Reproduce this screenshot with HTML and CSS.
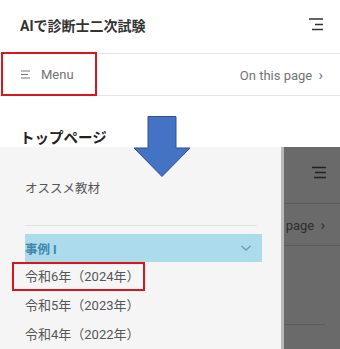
FILE: index.html
```html
<!DOCTYPE html>
<html lang="ja">
<head>
  <meta charset="UTF-8" />
  <meta name="viewport" content="width=device-width, initial-scale=1.0"/>
  <title>AIで診断士二次試験</title>
  <link rel="stylesheet" href="styles.css">
</head>
<body>

  <header class="site-header">
    <span class="site-title">AIで診断士二次試験</span>
    <svg class="burger" width="16" height="14" viewBox="0 0 16 14">
      <path d="M1 2h14M7 7.5h8M4 12.5h11" stroke="#333" stroke-width="1.6" fill="none"/>
    </svg>
  </header>

  <nav class="local-nav">
    <span class="menu-btn">
      <svg width="10" height="9" viewBox="0 0 10 9">
        <path d="M0 1h9M0 4.5h7M0 8h9" stroke="#777" stroke-width="1" fill="none"/>
      </svg>
      Menu
    </span>
    <span class="toc-btn">On this page <span class="chev">›</span></span>
  </nav>

  <main class="doc">
    <h2>トップページ</h2>
  </main>

  <!-- Sidebar opened -->
  <div class="drawer">
    <aside class="panel">
      <p class="pick">オススメ教材</p>
      <hr class="sep">
      <div class="group">
        <span>事例 I</span>
        <svg width="12" height="8" viewBox="0 0 12 8">
          <path d="M1.5 2l4.5 4 4.5-4" stroke="#6b9cb3" stroke-width="1.4" fill="none"/>
        </svg>
      </div>
      <ul class="years">
        <li>令和6年（2024年）</li>
        <li>令和5年（2023年）</li>
        <li>令和4年（2022年）</li>
      </ul>
    </aside>
    <div class="shade">
      <div class="shade-head">
        <svg width="15" height="13" viewBox="0 0 15 13">
          <path d="M0 1.5h14M3 6.5h11M2 11.5h12" stroke="#222" stroke-width="1.6" fill="none"/>
        </svg>
      </div>
      <div class="shade-bar"><span>page <span class="chev">›</span></span></div>
      <div class="shade-line"></div>
    </div>
  </div>

  <!-- Annotations -->
  <div class="mark mark-menu"></div>
  <div class="mark mark-year"></div>
  <svg class="arrow" width="60" height="62" viewBox="0 0 60 62">
    <polygon points="15,0.5 43,0.5 43,32 57,32 29,60.5 1,32 15,32" fill="#4472c4" stroke="#2f528f" stroke-width="1"/>
  </svg>

</body>
</html>
```

FILE: styles.css
```css
body {
  margin: 0;
  width: 340px;
  height: 349px;
  overflow: hidden;
  position: relative;
  background: #fff;
  font-family: Roboto, "Noto Sans CJK JP", sans-serif;
  color: #333;
}

.site-header {
  display: flex;
  justify-content: space-between;
  align-items: center;
  height: 53px;
  padding: 0 16px 0 20px;
  border-bottom: 1px solid #e4e4e4;
}

.site-title {
  font-size: 14px;
  font-weight: bold;
  color: #333;
  margin-top: -4px;
}

.burger {
  margin-top: -5px;
}

.local-nav {
  display: flex;
  justify-content: space-between;
  align-items: center;
  height: 41px;
  padding: 0 17px 0 21px;
  border-bottom: 1px solid #e4e4e4;
  font-size: 13px;
  color: #737373;
}

.menu-btn {
  display: flex;
  align-items: center;
  gap: 10px;
}

.chev {
  display: inline-block;
  margin-left: 3px;
  font-size: 15px;
}

.doc {
  padding: 0 20px;
}

.doc h2 {
  margin: 33px 0 0;
  font-size: 14.5px;
  font-weight: bold;
  line-height: 20px;
  color: #222;
}

/* drawer over the page */
.drawer {
  position: absolute;
  top: 147px;
  left: 0;
  right: 0;
  bottom: 0;
  display: flex;
}

.panel {
  width: 256px;
  padding: 0 0 0 25px;
  background: #f5f5f5;
  color: #555;
  font-size: 12.5px;
}

.pick {
  margin: 32px 0 0;
  line-height: 20px;
}

.sep {
  margin: 26px 24px 0 0;
  border: none;
  border-top: 1px solid #e2e2e2;
}

.group {
  display: flex;
  justify-content: space-between;
  align-items: center;
  height: 28px;
  margin: 8px 19px 0 0;
  padding-right: 10px;
  background: #acdbec;
  color: #3f87aa;
  font-weight: bold;
}

.years {
  list-style: none;
  margin: 0;
  padding: 0;
}

.years li {
  height: 29px;
  line-height: 29px;
  font-size: 13px;
}

.shade {
  flex: 1;
  background: #6a6a6a;
  border-left: 3px solid #b9b9b9;
  overflow: hidden;
}

.shade-head {
  display: flex;
  justify-content: flex-end;
  align-items: center;
  height: 56px;
  padding-right: 13px;
  border-bottom: 1px solid #5c5c5c;
}

.shade-head svg {
  margin-top: -6px;
}

.shade-bar {
  display: flex;
  justify-content: flex-end;
  align-items: center;
  height: 41px;
  padding-right: 15px;
  border-bottom: 1px solid #5c5c5c;
  white-space: nowrap;
  font-size: 13px;
  color: #2e2e2e;
}

.shade-line {
  width: 41px;
  margin-top: 78px;
  border-top: 1px solid #5c5c5c;
}

/* red callouts and arrow */
.mark {
  position: absolute;
  border: 2px solid #d7161d;
}

.mark-menu {
  left: 1px;
  top: 52px;
  width: 92px;
  height: 40px;
}

.mark-year {
  left: 12px;
  top: 262px;
  width: 129px;
  height: 25px;
}

.arrow {
  position: absolute;
  left: 133px;
  top: 116px;
}
```
